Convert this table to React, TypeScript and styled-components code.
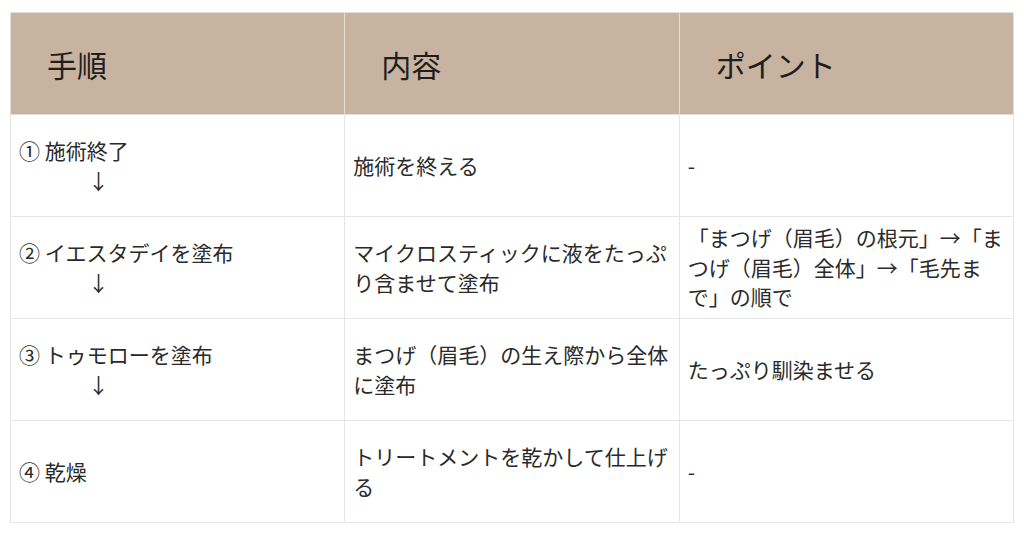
import React from "react";
import styled, { createGlobalStyle } from "styled-components";

const Global = createGlobalStyle`
  html, body { margin: 0; padding: 0; background: #ffffff; }
  body { font-family: "Noto Sans CJK JP", "Noto Sans", sans-serif; }
`;

const Page = styled.div`
  padding: 12px 10px;
`;

const Table = styled.table`
  width: 1004px;
  border-collapse: collapse;
  table-layout: fixed;
  font-family: "Noto Sans CJK JP", "Noto Sans", sans-serif;
`;

const HeadRow = styled.tr`
  height: 102px;
  background: #c8b2a0;
`;

const Row = styled.tr`
  height: 102px;
  background: #ffffff;
`;

const Th = styled.th`
  border: 1px solid #e4ddd7;
  padding: 0 36px;
  text-align: left;
  vertical-align: middle;
  font-size: 30px;
  font-weight: 400;
  color: #1e1e1e;
`;

const Td = styled.td`
  border: 1px solid #e6e6e6;
  padding: 0 8px;
  text-align: left;
  vertical-align: middle;
  font-size: 21px;
  line-height: 1.42;
  color: #2a2a2a;
  word-break: break-all;
`;

const Arrow = styled.span`
  display: block;
  padding-left: 69px;
`;

type Step = { step: string; arrow: boolean; content: string; point: string };

const steps: Step[] = [
  { step: "① 施術終了", arrow: true, content: "施術を終える", point: "-" },
  {
    step: "② イエスタデイを塗布",
    arrow: true,
    content: "マイクロスティックに液をたっぷり含ませて塗布",
    point: "「まつげ（眉毛）の根元」→「まつげ（眉毛）全体」→「毛先まで」の順で",
  },
  {
    step: "③ トゥモローを塗布",
    arrow: true,
    content: "まつげ（眉毛）の生え際から全体に塗布",
    point: "たっぷり馴染ませる",
  },
  { step: "④ 乾燥", arrow: false, content: "トリートメントを乾かして仕上げる", point: "-" },
];

export default function App() {
  return (
    <Page>
      <Global />
      <Table>
        <thead>
          <HeadRow>
            <Th>手順</Th>
            <Th>内容</Th>
            <Th>ポイント</Th>
          </HeadRow>
        </thead>
        <tbody>
          {steps.map((s) => (
            <Row key={s.step}>
              <Td>
                {s.step}
                {s.arrow && <Arrow>↓</Arrow>}
              </Td>
              <Td>{s.content}</Td>
              <Td>{s.point}</Td>
            </Row>
          ))}
        </tbody>
      </Table>
    </Page>
  );
}
